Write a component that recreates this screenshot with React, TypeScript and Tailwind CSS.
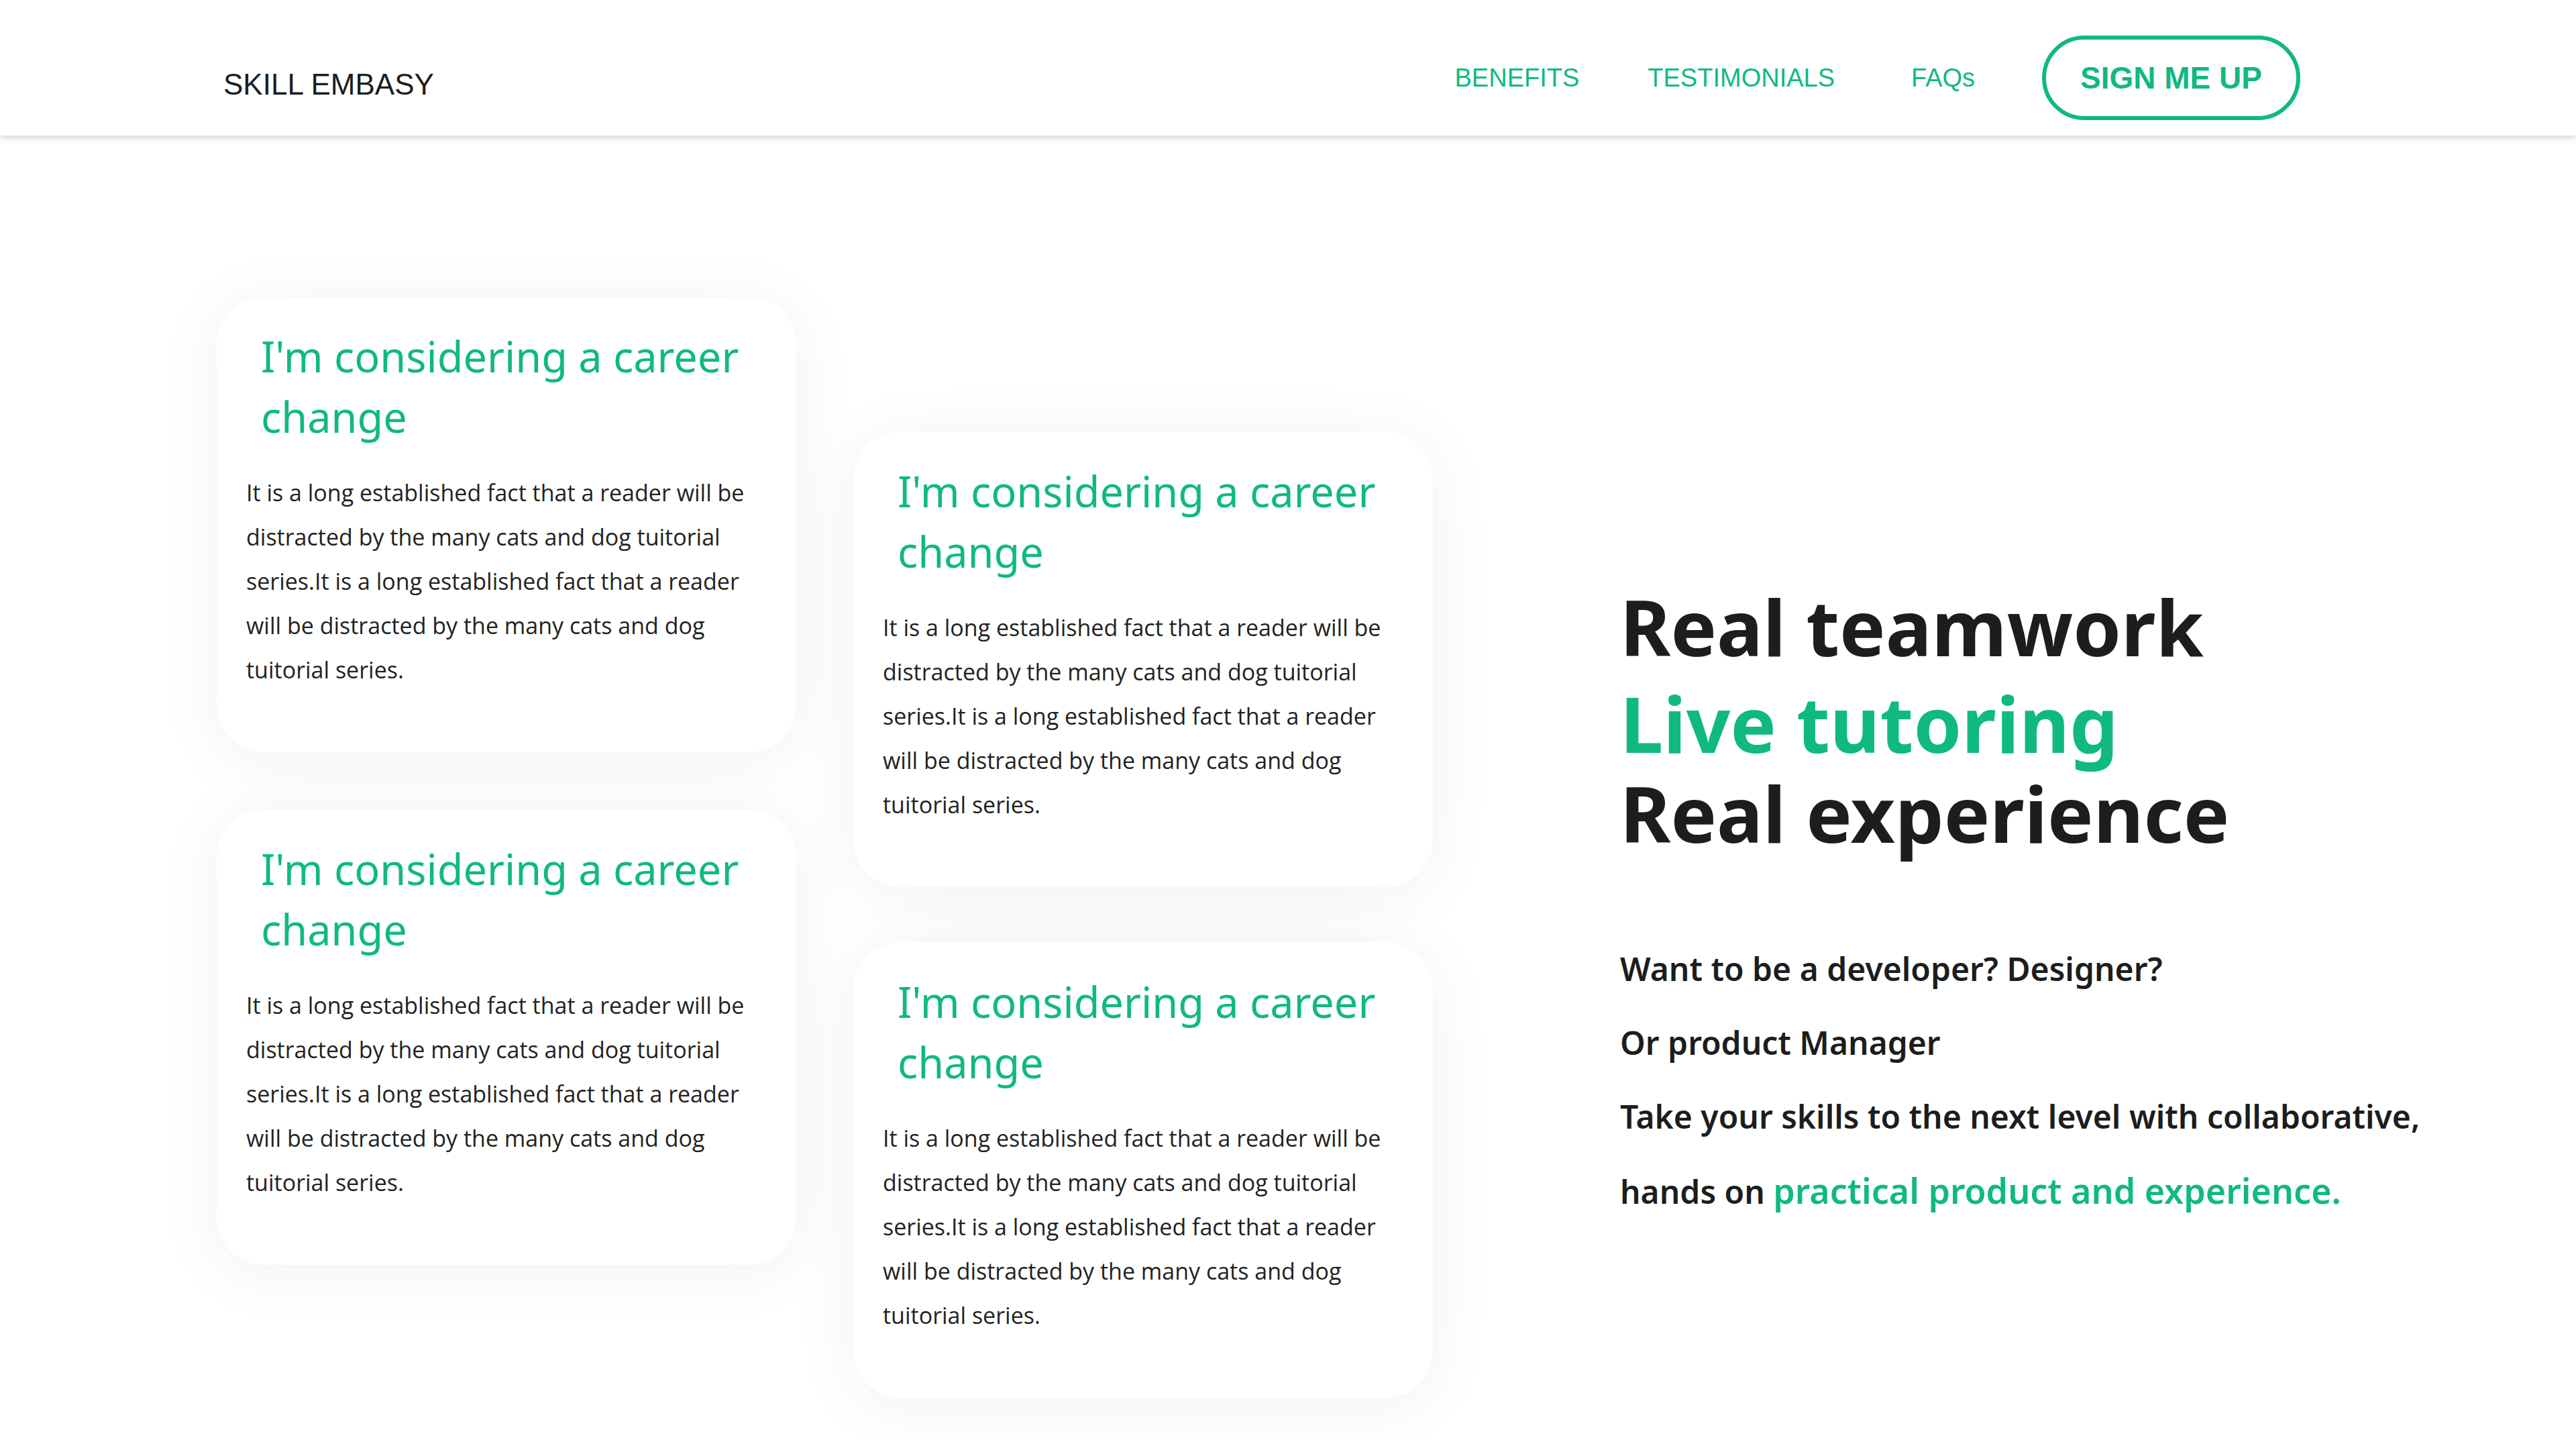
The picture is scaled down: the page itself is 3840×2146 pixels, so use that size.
import React from "react";

const CARD_TEXT =
  "It is a long established fact that a reader will be distracted by the many cats and dog tuitorial series.It is a long established fact that a reader will be distracted by the many cats and dog tuitorial series.";

function Card() {
  return (
    <div className="w-[864px] rounded-[70px] bg-white pt-[43px] pb-[90px] pl-[44px] pr-[44px] shadow-[0_10px_100px_rgba(0,0,0,0.06)]">
      <h3 className="pl-[22px] font-['Noto_Sans',sans-serif] text-[63px] leading-[90px] text-[#10b981]">
        I'm considering a career change
      </h3>
      <p className="mt-[35px] font-['Open_Sans',sans-serif] text-[34px] leading-[66px] text-[#222222]">
        {CARD_TEXT}
      </p>
    </div>
  );
}

export default function App() {
  return (
    <div className="min-h-screen bg-white">
      {/* Header */}
      <header className="relative z-10 flex h-[202px] items-center justify-between bg-white pl-[333px] pr-[411px] pt-[30px] shadow-[0_4px_10px_rgba(0,0,0,0.16)]">
        <div className="mt-[20px] font-['Liberation_Sans',sans-serif] text-[44px] text-[#1d1d1d]">
          SKILL EMBASY
        </div>
        <nav className="flex items-center font-['Liberation_Sans',sans-serif] text-[38px] text-[#10b981]">
          <a href="#">BENEFITS</a>
          <a href="#" className="ml-[102px]">TESTIMONIALS</a>
          <a href="#" className="ml-[114px]">FAQs</a>
          <button className="ml-[100px] flex h-[126px] items-center rounded-full border-[6px] border-[#10b981] px-[51px] text-[46px] font-bold">
            SIGN ME UP
          </button>
        </nav>
      </header>

      {/* Main */}
      <main className="flex pl-[323px] pt-[241px] pb-[64px]">
        <div className="flex gap-[85px]">
          <div className="flex flex-col gap-[86px]">
            <Card />
            <Card />
          </div>
          <div className="flex flex-col gap-[83px] pt-[201px]">
            <Card />
            <Card />
          </div>
        </div>

        <div className="ml-[279px] mt-[419px]">
          <h1 className="font-['Noto_Sans',sans-serif] text-[115px] font-bold leading-[144px] text-[#1d1d1d]">
            <span className="block">Real teamwork</span>
            <span className="block text-[#10b981]">Live tutoring</span>
            <span className="-mt-[10px] block">Real experience</span>
          </h1>
          <p className="mt-[105px] w-[1280px] font-['Noto_Sans',sans-serif] text-[48px] font-semibold leading-[110px] text-[#1d1d1d]">
            Want to be a developer? Designer?
            <br />
            Or product Manager
            <br />
            Take your skills to the next level with collaborative, hands on{" "}
            <span className="text-[52px] text-[#10b981]">practical product and experience.</span>
          </p>
        </div>
      </main>
    </div>
  );
}
